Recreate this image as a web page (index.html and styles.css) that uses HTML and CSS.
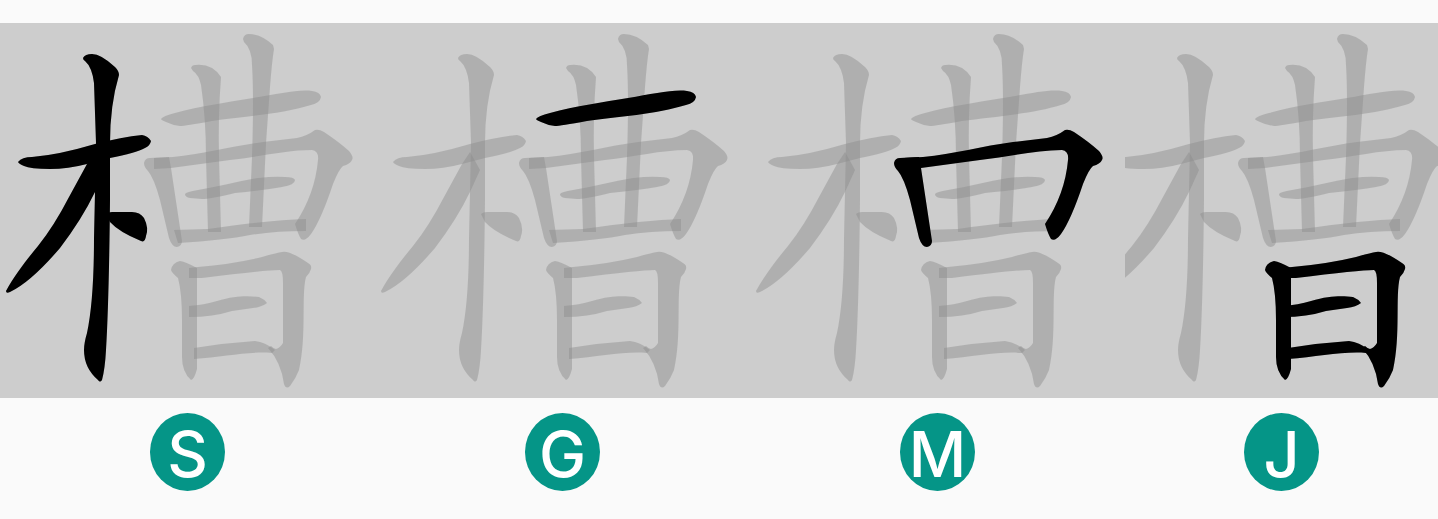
FILE: index.html
```html
<!DOCTYPE html>
<html lang="zh">
<head>
<meta charset="utf-8">
<meta name="viewport" content="width=device-width, initial-scale=1">
<title>槽</title>
<link rel="stylesheet" href="styles.css">
</head>
<body>
<svg class="stroke-library" aria-hidden="true">
  <defs>
    <!-- left part: tree -->
    <path id="s1" d="M18 162Q22 157 32 157Q58 155 95 144Q122 137 142 135Q148 136 151 141Q150 146 145 148Q136 153 110 158L87 164Q68 169 50 169Q30 169 24 166Q19 164 18 162Z"/>
    <path id="s2" d="M83 58Q85 54 92 54Q101 54 115 67Q119 71 119 75Q110 105 110 143L110 200Q109 300 106 350Q105 369 102 380Q100 383 98 380Q84 368 84 350Q84 343 87 333Q94 300 94 238L95 192L96 143L94 83Q92 67 85 61Q83 60 83 58Z"/>
    <path id="s3" d="M95 152Q99 159 105 170L95 192Q82 219 60 248Q31 282 10 292Q6 294 6 291C14 276 28 258 38 246Q54 226 69 197L87 164Z"/>
    <path id="s4" d="M106 214Q108 212 112 212L132 212Q140 212 144 218Q149 228 146 236Q145 243 141 241Q119 232 110 222Z"/>
    <!-- upper right part -->
    <path id="s5" d="M161 119Q163 116 175 113C200 106 229 102 253 98C278 94 299 89 312 91Q320 92 321 97Q320 103 311 105C282 114 241 117 212 121Q185 126 180 126Q172 125 166 122Q161 120 161 119Z"/>
    <path id="s6" d="M148 171Q144 167 144 163Q145 158 150 158L169 157L171 168L182 241Q182 246 177 247Q172 247 169 238L160 200Q154 178 148 171Z"/>
    <path id="s7" d="M154 158L173 157C203 154 233 146 263 142L297 138Q307 136 315 130Q319 129 324 132Q339 142 349 151Q354 157 352 160Q350 164 343 166Q339 169 333 184Q321 220 311 234Q305 242 301 239Q298 234 295 224Q315 194 318 160Q319 151 312 150C287 150 258 157 230 160L171 168L154 169Z"/>
    <path id="s8" d="M185 194Q186 192 198 190C218 187 238 181 258 178Q275 176 285 177Q294 177 295 180Q295 185 282 187Q265 190 235 193Q210 199 202 199L190 198Q185 197 185 194Z"/>
    <path id="s9" d="M191 68Q192 65 195 65Q212 63 221 77Q218 116 219 157L221 232L208 232L206 157Q206 119 201 85Q199 75 193 71Z"/>
    <path id="s10" d="M243 39Q244 34 249 34Q261 34 273 45L274 49Q272 61 270 87L266 143L262 227L249 227L252 157Q254 96 252 65Q252 49 244 42Z"/>
    <path id="s11" d="M174 230L208 229Q270 220 306 219L306 231Q275 231 250 235Q225 240 178 243Z"/>
    <!-- lower right part -->
    <path id="s12" d="M171 270Q172 263 180 261Q186 262 197 268L197 369Q194 380 191 380Q182 372 182 357L182 320Q182 293 178 278Q172 273 171 270Z"/>
    <path id="s13" d="M189 268L198 267Q233 264 262 257Q276 253 282 252Q289 250 308 263Q312 265 311 269Q310 273 306 277C301 296 307 335 299 370Q296 378 290 386Q286 390 284 384Q281 362 268 348L271 346Q274 349 276 349Q280 348 283 343L283 283Q283 271 280 270Q265 270 202 278L189 278Z"/>
    <path id="s14" d="M189 306Q204 305 217 301C237 295 250 296 259 297Q264 299 267 303Q262 307 253 308L232 311Q213 317 189 317Z"/>
    <path id="s15" d="M194 348Q224 343 255 341Q265 342 275 350L272 353C250 351 224 357 194 359Z"/>
    <g id="character">
      <use href="#s1"/><use href="#s2"/><use href="#s3"/><use href="#s4"/><use href="#s5"/>
      <use href="#s6"/><use href="#s7"/><use href="#s8"/><use href="#s9"/><use href="#s10"/>
      <use href="#s11"/><use href="#s12"/><use href="#s13"/><use href="#s14"/><use href="#s15"/>
    </g>
  </defs>
</svg>
<main class="breakdown">
  <figure class="part">
    <svg class="tile" viewBox="0 23 375 375" preserveAspectRatio="xMidYMid slice" role="img" aria-label="木">
      <use class="ghost" href="#character"/>
      <g class="ink"><use href="#s1"/><use href="#s2"/><use href="#s3"/><use href="#s4"/></g>
    </svg>
    <figcaption class="key">S</figcaption>
  </figure>
  <figure class="part">
    <svg class="tile" viewBox="0 23 375 375" preserveAspectRatio="xMidYMid slice" role="img" aria-label="一">
      <use class="ghost" href="#character"/>
      <g class="ink"><use href="#s5"/></g>
    </svg>
    <figcaption class="key">G</figcaption>
  </figure>
  <figure class="part">
    <svg class="tile" viewBox="0 23 375 375" preserveAspectRatio="xMidYMid slice" role="img" aria-label="冂">
      <use class="ghost" href="#character"/>
      <g class="ink"><use href="#s6"/><use href="#s7"/></g>
    </svg>
    <figcaption class="key">M</figcaption>
  </figure>
  <figure class="part">
    <svg class="tile tile-narrow" viewBox="0 23 375 375" preserveAspectRatio="xMidYMid slice" role="img" aria-label="日">
      <use class="ghost" href="#character"/>
      <g class="ink"><use href="#s12"/><use href="#s13"/><use href="#s14"/><use href="#s15"/></g>
    </svg>
    <figcaption class="key">J</figcaption>
  </figure>
</main>
</body>
</html>
```
FILE: styles.css
```css
body {
  margin: 0;
  background: #fafafa;
  font-family: Inter, "Liberation Sans", Arial, sans-serif;
}

.stroke-library {
  position: absolute;
  width: 0;
  height: 0;
}

.breakdown {
  display: grid;
  grid-template-columns: 375fr 375fr 375fr 313fr;
  padding-top: 23px;
}

.part {
  display: flex;
  flex-direction: column;
  align-items: center;
  gap: 15px;
  min-width: 0;
  margin: 0;
}

.tile {
  display: block;
  width: 100%;
  aspect-ratio: 1;
  background: #cdcdcd;
}

.tile-narrow {
  aspect-ratio: 313 / 375;
}

.ghost {
  fill: rgba(140, 140, 140, 0.45);
}

.ink {
  fill: #000;
}

.key {
  box-sizing: border-box;
  width: 75px;
  height: 78px;
  padding-top: 4px;
  border-radius: 50%;
  background: #059587;
  color: #fff;
  font-size: 63px;
  font-weight: 500;
  line-height: 74px;
  text-align: center;
}
```
